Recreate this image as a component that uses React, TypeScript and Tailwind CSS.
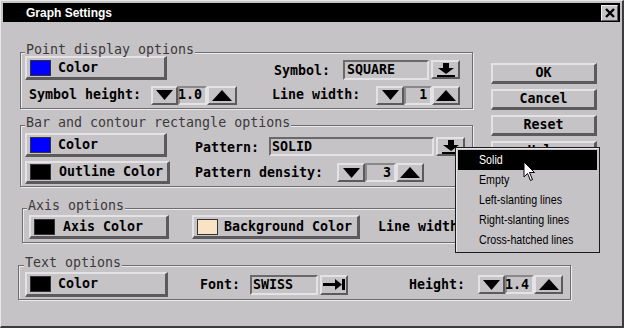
import React from "react";

const MONO = "font-['DejaVu_Sans_Mono',monospace] text-[13.3px] leading-none";

type BoxProps = { className?: string; children?: React.ReactNode };

// raised motif-style button
function Raised({ className = "", children }: BoxProps) {
  return (
    <div
      className={`flex items-center border-t-2 border-l-2 border-r-[3px] border-b-[3px] border-t-[#e4e2e4] border-l-[#e4e2e4] border-r-[#5c5a5c] border-b-[#5c5a5c] ${className}`}
    >
      {children}
    </div>
  );
}

function SmallBtn({ className = "", children }: BoxProps) {
  return (
    <div
      className={`flex items-center justify-center border-2 border-t-[#e4e2e4] border-l-[#e4e2e4] border-r-[#5c5a5c] border-b-[#5c5a5c] ${className}`}
    >
      {children}
    </div>
  );
}

function Sunken({ className = "", children }: BoxProps) {
  return (
    <div
      className={`flex items-center border-2 border-t-[#6a686a] border-l-[#6a686a] border-r-[#e4e2e4] border-b-[#e4e2e4] ${MONO} font-bold ${className}`}
    >
      {children}
    </div>
  );
}

function Down() {
  return (
    <svg width="17" height="10" viewBox="0 0 17 10">
      <path d="M0 0H17L8.5 10Z" fill="#000" />
    </svg>
  );
}

function Up() {
  return (
    <svg width="20" height="11" viewBox="0 0 20 11">
      <path d="M0 11H20L10 0Z" fill="#000" />
    </svg>
  );
}

function ComboArrow() {
  return (
    <svg width="18" height="14" viewBox="0 0 18 14">
      <rect x="6" y="0" width="6" height="5" fill="#000" />
      <path d="M1 5H17L9 11Z" fill="#000" />
      <rect x="0" y="12" width="18" height="2" fill="#000" />
    </svg>
  );
}

function JumpArrow() {
  return (
    <svg width="22" height="11" viewBox="0 0 22 11">
      <rect x="0" y="4" width="13" height="3" fill="#000" />
      <path d="M12 0L19 5.5L12 11Z" fill="#000" />
      <rect x="19" y="0" width="3" height="11" fill="#000" />
    </svg>
  );
}

function Spinner({ value, dw, fw, uw, className = "" }: { value: string; dw: string; fw: string; uw: string; className?: string }) {
  return (
    <div className={`flex h-[19px] ${className}`}>
      <SmallBtn className={dw}>
        <Down />
      </SmallBtn>
      <div
        className={`flex items-center justify-end pr-[3px] border-2 border-t-[#8a888a] border-l-[#8a888a] border-r-[#e4e2e4] border-b-[#e4e2e4] ${MONO} font-bold ${fw}`}
      >
        {value}
      </div>
      <SmallBtn className={uw}>
        <Up />
      </SmallBtn>
    </div>
  );
}

function ColorBtn({ swatch, label, className = "", gap = "ml-[7px]" }: { swatch: string; label: string; className?: string; gap?: string }) {
  return (
    <Raised className={className}>
      <span className={`ml-[3px] w-[21px] h-[16px] border border-[#333] ${swatch}`} />
      <span className={`${MONO} font-bold ${gap}`}>{label}</span>
    </Raised>
  );
}

function Group({ label, className = "", legendLeft = "left-[4px]", children }: BoxProps & { label: string; legendLeft?: string }) {
  return (
    <div className={`relative border border-[#6e6c6e] shadow-[1px_1px_0_#ecebec,inset_1px_1px_0_#ecebec] ${className}`}>
      <span className={`absolute -top-[10px] ${legendLeft} bg-[#c6c3c6] px-[1px] ${MONO} text-[#3a3a3a]`}>{label}</span>
      {children}
    </div>
  );
}

const menuItems = ["Solid", "Empty", "Left-slanting lines", "Right-slanting lines", "Cross-hatched lines"];

export default function App() {
  return (
    <div className="relative w-[624px] h-[328px] overflow-hidden bg-[#c6c3c6] border-t border-l border-t-[#e8e8e8] border-l-[#e8e8e8] border-r-2 border-b-2 border-r-[#3c3c3c] border-b-[#3c3c3c] text-black">
      {/* title bar */}
      <div className="mx-[2px] mt-[2px] h-[19px] bg-black flex items-center justify-between pl-[23px] pr-[2px]">
        <span className="text-white font-bold text-[12px] font-['Liberation_Sans',Arial,sans-serif]">Graph Settings</span>
        <div className="w-[17px] h-[16px] bg-[#c6c3c6] border border-t-[#f0f0f0] border-l-[#f0f0f0] border-r-[#5c5a5c] border-b-[#5c5a5c] flex items-center justify-center">
          <svg width="10" height="10" viewBox="0 0 10 10">
            <path d="M1 1L9 9M9 1L1 9" stroke="#000" strokeWidth="2.4" />
          </svg>
        </div>
      </div>

      <div className="pl-[19px]">
        <div className="flex">
          <div className="w-[453px]">
            <Group label="Point display options" className="mt-[30px] h-[57px] pt-[3px] pl-[4px]">
              <div className="flex items-start h-[24px]">
                <ColorBtn swatch="bg-[#0000ff]" label="Color" className="w-[142px] h-[24px]" />
                <span className={`${MONO} font-bold ml-[107px] mt-[8px]`}>Symbol:</span>
                <Sunken className="ml-[13px] mt-[4px] w-[86px] h-[20px] pl-[2px]">SQUARE</Sunken>
                <SmallBtn className="ml-[2px] mt-[4px] w-[29px] h-[19px]">
                  <ComboArrow />
                </SmallBtn>
              </div>
              <div className="flex items-center h-[18px] mt-[6px]">
                <span className={`${MONO} font-bold ml-[4px]`}>Symbol height:</span>
                <Spinner value="1.0" dw="w-[27px]" fw="w-[29px]" uw="w-[30px]" className="ml-[10px]" />
                <span className={`${MONO} font-bold ml-[35px]`}>Line width:</span>
                <Spinner value="1" dw="w-[28px]" fw="w-[28px]" uw="w-[28px]" className="ml-[16px]" />
              </div>
            </Group>

            <Group label="Bar and contour rectangle options" className="mt-[16px] h-[62px] pt-[7px] pl-[4px]">
              <div className="flex items-start h-[24px]">
                <ColorBtn swatch="bg-[#0000ff]" label="Color" className="w-[142px] h-[24px]" />
                <span className={`${MONO} font-bold ml-[28px] mt-[8px]`}>Pattern:</span>
                <Sunken className="ml-[10px] mt-[4px] w-[165px] h-[19px] pl-[1px]">SOLID</Sunken>
                <SmallBtn className="ml-[2px] mt-[4px] w-[29px] h-[19px]">
                  <ComboArrow />
                </SmallBtn>
              </div>
              <div className="flex items-center h-[23px] mt-[4px]">
                <ColorBtn swatch="bg-black" label="Outline Color" className="w-[145px] h-[23px]" gap="ml-[8px]" />
                <span className={`${MONO} font-bold ml-[25px]`}>Pattern density:</span>
                <Spinner value="3" dw="w-[28px]" fw="w-[31px]" uw="w-[28px]" className="ml-[14px]" />
              </div>
            </Group>
          </div>

          <div className="ml-[18px] mt-[41px] flex flex-col gap-[5px]">
            {["OK", "Cancel", "Reset", "Help"].map((b) => (
              <Raised key={b} className="w-[106px] h-[21px] justify-center">
                <span className={`${MONO} font-bold`}>{b}</span>
              </Raised>
            ))}
          </div>
        </div>

        <Group label="Axis options" className="ml-[2px] mt-[21px] w-[569px] h-[35px] pt-[6px] pl-[6px]">
          <div className="flex items-center h-[24px]">
            <ColorBtn swatch="bg-black" label="Axis Color" className="w-[140px] h-[24px]" gap="ml-[8px]" />
            <ColorBtn swatch="bg-[#f8e4c4]" label="Background Color" className="ml-[23px] w-[168px] h-[24px]" gap="ml-[6px]" />
            <span className={`${MONO} font-bold ml-[18px]`}>Line width:</span>
          </div>
        </Group>

        <Group label="Text options" legendLeft="left-[5px]" className="-ml-[2px] mt-[22px] w-[553px] h-[35px] pt-[6px] pl-[6px]">
          <div className="flex items-center h-[25px]">
            <ColorBtn swatch="bg-black" label="Color" className="w-[143px] h-[25px]" />
            <span className={`${MONO} font-bold ml-[32px]`}>Font:</span>
            <Sunken className="ml-[10px] w-[68px] h-[20px] pl-[1px]">SWISS</Sunken>
            <SmallBtn className="ml-[2px] w-[28px] h-[20px]">
              <JumpArrow />
            </SmallBtn>
            <span className={`${MONO} font-bold ml-[61px]`}>Height:</span>
            <Spinner value="1.4" dw="w-[27px]" fw="w-[29px]" uw="w-[29px]" className="ml-[13px]" />
          </div>
        </Group>
      </div>

      {/* open pattern menu */}
      <div className="absolute left-[454px] top-[146px] w-[145px] border border-[#1a1a1a] shadow-[inset_1px_1px_0_#e8e8e8] bg-[#c6c3c6] p-[2px]">
        {menuItems.map((m, i) => (
          <div
            key={m}
            className={`flex items-center h-[20px] pl-[21px] pb-[1px] whitespace-nowrap ${i === 0 ? "bg-black text-white" : "text-black"}`}
          >
            <span className="inline-block origin-left scale-x-[0.79] text-[13.5px] leading-none font-['Liberation_Sans',Arial,sans-serif]">{m}</span>
          </div>
        ))}
      </div>

      {/* mouse pointer */}
      <svg className="absolute left-[522px] top-[160px]" width="13" height="21" viewBox="0 0 13 21">
        <path d="M1 1V16L4.5 12.5L7.5 19.5L9.5 18.5L6.5 11.5H11.5Z" fill="#fff" stroke="#000" strokeWidth="1" strokeLinejoin="miter" />
      </svg>
    </div>
  );
}
